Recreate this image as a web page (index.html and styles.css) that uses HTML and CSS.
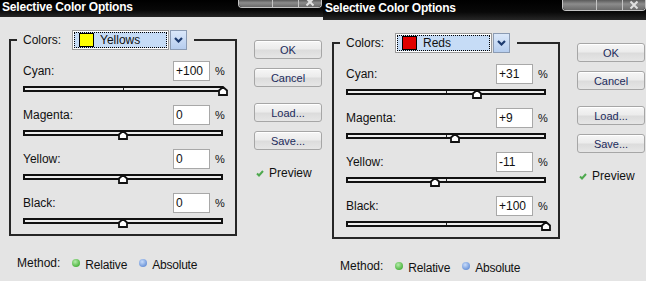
FILE: index.html
```html
<!DOCTYPE html>
<html lang="en">
<head>
    <meta charset="UTF-8">
    <title>Selective Color Options</title>
    <link rel="stylesheet" href="styles.css">
</head>
<body>
    <!-- Yellows -->
    <div class="dialog">
        <div class="titlebar">
            <span class="title">Selective Color Options</span>
            <div class="winctl">
                <span class="seg seg-min"></span>
                <span class="seg seg-max"></span>
                <span class="seg seg-close">
                    <svg width="10" height="10" viewBox="0 0 10 10"><path d="M1.5 1.5 L8.5 8.5 M8.5 1.5 L1.5 8.5" stroke="#e0e0e0" stroke-width="2"/></svg>
                </span>
            </div>
        </div>
        <div class="body">
            <div class="main">
                <fieldset class="group">
                    <legend class="legend">
                        <span class="legend-label">Colors:</span>
                        <span class="select">
                            <span class="select-value"><span class="swatch swatch-yellow"></span>Yellows</span>
                        </span>
                        <span class="select-arrow">
                            <svg width="9" height="6" viewBox="0 0 9 6"><path d="M1 1 L4.5 4.5 L8 1" fill="none" stroke="#1d3b6f" stroke-width="2.2"/></svg>
                        </span>
                    </legend>

                    <div class="slider">
                        <div class="slider-head"><span class="slider-label">Cyan:</span><span class="value">+100</span><span class="pct">%</span></div>
                        <div class="track"><svg class="thumb" style="left: 198px" width="10" height="10" viewBox="0 0 10 10"><path d="M5 1 L9 4.5 V9 H1 V4.5 Z" fill="#fff" stroke="#111" stroke-width="1.8"/></svg></div>
                    </div>
                    <div class="slider">
                        <div class="slider-head"><span class="slider-label">Magenta:</span><span class="value">0</span><span class="pct">%</span></div>
                        <div class="track"><svg class="thumb" style="left: 98px" width="10" height="10" viewBox="0 0 10 10"><path d="M5 1 L9 4.5 V9 H1 V4.5 Z" fill="#fff" stroke="#111" stroke-width="1.8"/></svg></div>
                    </div>
                    <div class="slider">
                        <div class="slider-head"><span class="slider-label">Yellow:</span><span class="value">0</span><span class="pct">%</span></div>
                        <div class="track"><svg class="thumb" style="left: 98px" width="10" height="10" viewBox="0 0 10 10"><path d="M5 1 L9 4.5 V9 H1 V4.5 Z" fill="#fff" stroke="#111" stroke-width="1.8"/></svg></div>
                    </div>
                    <div class="slider">
                        <div class="slider-head"><span class="slider-label">Black:</span><span class="value">0</span><span class="pct">%</span></div>
                        <div class="track"><svg class="thumb" style="left: 98px" width="10" height="10" viewBox="0 0 10 10"><path d="M5 1 L9 4.5 V9 H1 V4.5 Z" fill="#fff" stroke="#111" stroke-width="1.8"/></svg></div>
                    </div>
                </fieldset>

                <div class="buttons">
                    <button class="btn">OK</button>
                    <button class="btn">Cancel</button>
                    <button class="btn btn-gap">Load...</button>
                    <button class="btn">Save...</button>
                    <div class="preview">
                        <svg width="8" height="7" viewBox="0 0 8 7"><path d="M1 3.5 L3 5.5 L7 1" fill="none" stroke="#4ea94e" stroke-width="2"/></svg>
                        Preview
                    </div>
                </div>
            </div>

            <div class="method">
                <span class="method-label">Method:</span>
                <span class="radio"><span class="dot dot-green"></span><span class="radio-text">Relative</span></span>
                <span class="radio"><span class="dot dot-blue"></span><span class="radio-text">Absolute</span></span>
            </div>
        </div>
    </div>

    <!-- Reds -->
    <div class="dialog dialog-right">
        <div class="titlebar">
            <span class="title">Selective Color Options</span>
            <div class="winctl">
                <span class="seg seg-min"></span>
                <span class="seg seg-max"></span>
                <span class="seg seg-close">
                    <svg width="10" height="10" viewBox="0 0 10 10"><path d="M1.5 1.5 L8.5 8.5 M8.5 1.5 L1.5 8.5" stroke="#e0e0e0" stroke-width="2"/></svg>
                </span>
            </div>
        </div>
        <div class="body">
            <div class="main">
                <fieldset class="group">
                    <legend class="legend">
                        <span class="legend-label">Colors:</span>
                        <span class="select">
                            <span class="select-value"><span class="swatch swatch-red"></span>Reds</span>
                        </span>
                        <span class="select-arrow">
                            <svg width="9" height="6" viewBox="0 0 9 6"><path d="M1 1 L4.5 4.5 L8 1" fill="none" stroke="#1d3b6f" stroke-width="2.2"/></svg>
                        </span>
                    </legend>

                    <div class="slider">
                        <div class="slider-head"><span class="slider-label">Cyan:</span><span class="value">+31</span><span class="pct">%</span></div>
                        <div class="track"><svg class="thumb" style="left: 129px" width="10" height="10" viewBox="0 0 10 10"><path d="M5 1 L9 4.5 V9 H1 V4.5 Z" fill="#fff" stroke="#111" stroke-width="1.8"/></svg></div>
                    </div>
                    <div class="slider">
                        <div class="slider-head"><span class="slider-label">Magenta:</span><span class="value">+9</span><span class="pct">%</span></div>
                        <div class="track"><svg class="thumb" style="left: 107px" width="10" height="10" viewBox="0 0 10 10"><path d="M5 1 L9 4.5 V9 H1 V4.5 Z" fill="#fff" stroke="#111" stroke-width="1.8"/></svg></div>
                    </div>
                    <div class="slider">
                        <div class="slider-head"><span class="slider-label">Yellow:</span><span class="value">-11</span><span class="pct">%</span></div>
                        <div class="track"><svg class="thumb" style="left: 87px" width="10" height="10" viewBox="0 0 10 10"><path d="M5 1 L9 4.5 V9 H1 V4.5 Z" fill="#fff" stroke="#111" stroke-width="1.8"/></svg></div>
                    </div>
                    <div class="slider">
                        <div class="slider-head"><span class="slider-label">Black:</span><span class="value">+100</span><span class="pct">%</span></div>
                        <div class="track"><svg class="thumb" style="left: 198px" width="10" height="10" viewBox="0 0 10 10"><path d="M5 1 L9 4.5 V9 H1 V4.5 Z" fill="#fff" stroke="#111" stroke-width="1.8"/></svg></div>
                    </div>
                </fieldset>

                <div class="buttons">
                    <button class="btn">OK</button>
                    <button class="btn">Cancel</button>
                    <button class="btn btn-gap">Load...</button>
                    <button class="btn">Save...</button>
                    <div class="preview">
                        <svg width="8" height="7" viewBox="0 0 8 7"><path d="M1 3.5 L3 5.5 L7 1" fill="none" stroke="#4ea94e" stroke-width="2"/></svg>
                        Preview
                    </div>
                </div>
            </div>

            <div class="method">
                <span class="method-label">Method:</span>
                <span class="radio"><span class="dot dot-green"></span><span class="radio-text">Relative</span></span>
                <span class="radio"><span class="dot dot-blue"></span><span class="radio-text">Absolute</span></span>
            </div>
        </div>
    </div>
</body>
</html>
```

FILE: styles.css
```css
* {
    margin: 0;
    padding: 0;
    box-sizing: border-box;
}

body {
    width: 646px;
    height: 281px;
    overflow: hidden;
    display: flex;
    background: #e4e4e4;
    font-family: "Liberation Sans", Arial, sans-serif;
    font-size: 12px;
    color: #111;
}

.dialog {
    width: 323px;
    height: 281px;
    display: flex;
    flex-direction: column;
    background: #e4e4e4;
}

/* title bar */
.titlebar {
    height: 17px;
    display: flex;
    justify-content: space-between;
    align-items: flex-start;
    padding-left: 2px;
    background: linear-gradient(#000, #080808 60%, #262626);
}

.title {
    color: #fff;
    font-weight: bold;
    font-size: 12px;
    line-height: 15px;
    letter-spacing: -0.2px;
}

.winctl {
    width: 84px;
    height: 8px;
    margin-right: 1px;
    display: flex;
    border: 1px solid #c4c4c4;
    border-top: none;
    border-radius: 0 0 4px 4px;
    overflow: hidden;
}

.seg {
    height: 100%;
    background: linear-gradient(#5a5a5a, #8c8c8c 40%, #6a6a6a);
}

.seg-min { width: 33px; }

.seg-max {
    width: 26px;
    border-left: 1px solid #c4c4c4;
}

.seg-close {
    flex: 1;
    border-left: 1px solid #c4c4c4;
    display: flex;
    justify-content: center;
    align-items: flex-end;
}

.seg-close svg { flex: none; }

.dialog-right .titlebar {
    height: 20px;
    padding-top: 1px;
}

.dialog-right .winctl {
    height: 11px;
    margin-top: -1px;
    margin-right: 0;
}

/* body */
.body {
    flex: 1;
    display: flex;
    flex-direction: column;
    padding: 13px 0 0 9px;
}

.main {
    display: flex;
    gap: 17px;
}

.group {
    width: 228px;
    min-width: 0;
    border: 2px solid #262626;
    padding: 11px 12px 10px;
}

.legend {
    display: flex;
    align-items: center;
    height: 20px;
    margin-left: -6px;
    padding: 0 7px 0 6px;
}

.legend-label { margin-right: 11px; }

.select {
    width: 97px;
    height: 20px;
    border: 1px solid #9a9a9a;
    background: #fff;
    padding: 1px;
    display: flex;
}

.select-value {
    flex: 1;
    display: flex;
    align-items: center;
    gap: 6px;
    padding-left: 4px;
    background: #c6dcf6;
    border: 1px dotted #000;
}

.swatch {
    width: 15px;
    height: 14px;
    border: 1px solid #000;
}

.swatch-yellow { background: #ffff00; }
.swatch-red { background: #e00000; }

.select-arrow {
    width: 17px;
    height: 20px;
    margin-left: 1px;
    display: flex;
    justify-content: center;
    align-items: center;
    border: 1px solid #8b9bb3;
    background: linear-gradient(#dbe8fa, #b6cdee);
}

/* sliders */
.slider { margin-bottom: 13px; }
.slider:last-child { margin-bottom: 0; }

.slider-head {
    height: 20px;
    display: flex;
    align-items: center;
}

.slider-label { flex: 1; }

.value {
    width: 37px;
    height: 20px;
    line-height: 18px;
    padding-left: 2px;
    background: #fff;
    border: 1px solid #a8a8a8;
}

.pct {
    width: 13px;
    padding-left: 5px;
    font-size: 11px;
}

.track {
    position: relative;
    height: 6px;
    margin-top: 5px;
    border: 2px solid #111;
    background: #ededed;
}

.track::before {
    content: "";
    position: absolute;
    left: 50%;
    top: 0;
    bottom: 0;
    width: 1px;
    background: #222;
}

.thumb {
    position: absolute;
    top: -2px;
    transform: translateX(-50%);
}

/* buttons */
.buttons {
    width: 68px;
    display: flex;
    flex-direction: column;
    padding-top: 10px;
}

.btn {
    height: 19px;
    margin-bottom: 9px;
    font: inherit;
    font-size: 11px;
    color: #1c2b5c;
    border: 1px solid #a6a6a6;
    border-radius: 3px;
    background: linear-gradient(#f6f6f6, #ececec 45%, #dcdcdc 55%, #e6e6e6);
    box-shadow: inset 0 1px 0 #fff;
}

.btn-gap { margin-top: 7px; }

.preview {
    height: 16px;
    margin-top: 6px;
    display: flex;
    align-items: center;
    gap: 5px;
    padding-left: 2px;
}

/* method */
.method {
    height: 16px;
    margin-top: 19px;
    padding-left: 8px;
    display: flex;
    align-items: center;
}

.radio {
    display: flex;
    align-items: center;
    gap: 5px;
    margin-left: 12px;
}

.radio + .radio { margin-left: 12px; }

.radio-text {
    margin-top: 4px;
    letter-spacing: -0.2px;
}

.dot {
    width: 8px;
    height: 8px;
    border-radius: 50%;
}

.dot-green { background: radial-gradient(circle at 40% 35%, #b4ecaa, #4eb541 70%); }
.dot-blue { background: radial-gradient(circle at 40% 35%, #c8dcfa, #6e96da 70%); }
```
